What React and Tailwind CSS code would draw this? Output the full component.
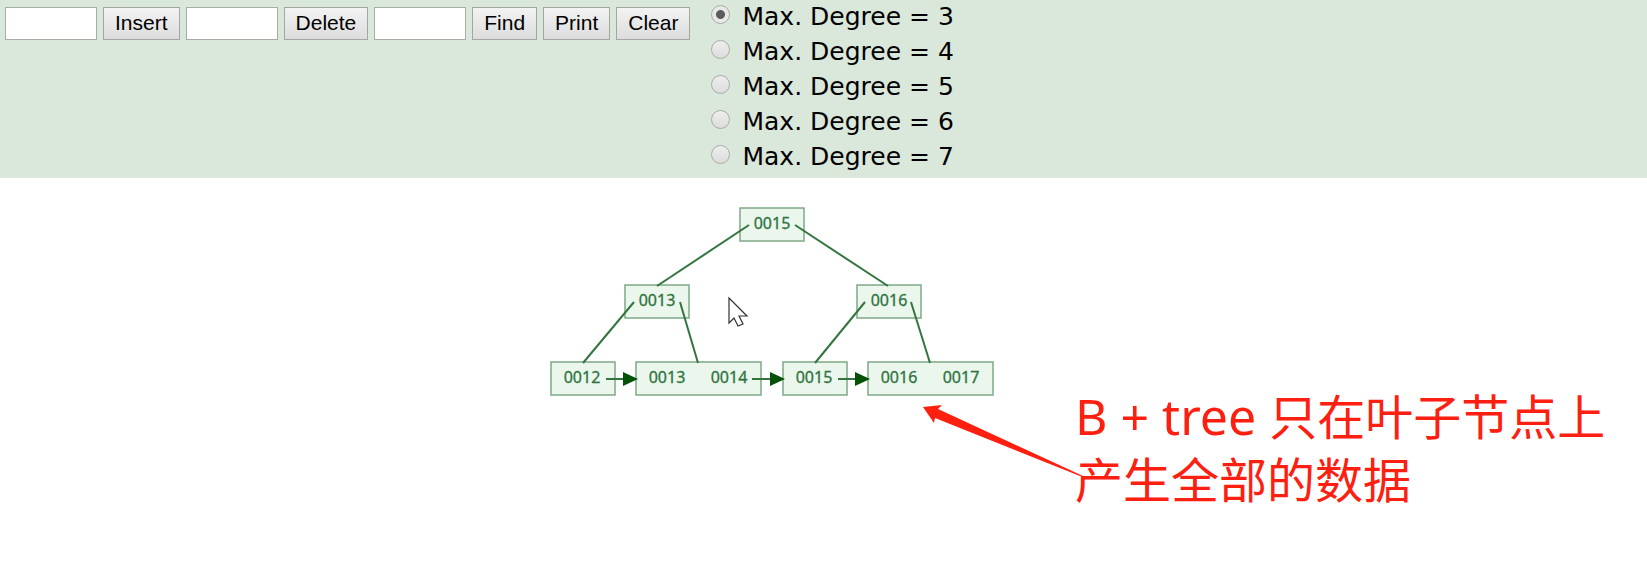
import React, { useState } from "react";

const DEGREES = [3, 4, 5, 6, 7];

const NODES = [
  { x: 740, y: 30, w: 64, keys: [["0015", 32]] },
  { x: 625, y: 107, w: 64, keys: [["0013", 32]] },
  { x: 857, y: 107, w: 64, keys: [["0016", 32]] },
  { x: 551, y: 184, w: 64, keys: [["0012", 31]] },
  { x: 636, y: 184, w: 125, keys: [["0013", 31], ["0014", 93]] },
  { x: 783, y: 184, w: 64, keys: [["0015", 31]] },
  { x: 868, y: 184, w: 125, keys: [["0016", 31], ["0017", 93]] },
];

const EDGES = [
  [749, 47, 657, 108],
  [795, 47, 888, 108],
  [634, 124, 583, 185],
  [680, 124, 698, 185],
  [865, 124, 815, 185],
  [911, 124, 930, 185],
];

const LINKS = [
  [606, 638],
  [752, 785],
  [838, 870],
];

const INPUT =
  "h-[33px] w-[92px] border border-[#a6aca6] bg-white px-1 font-['Liberation_Sans',sans-serif] text-[21px] text-black";
const BUTTON =
  "h-[33px] border border-[#a3a6a3] bg-linear-to-b from-[#f3f3f3] to-[#dddddd] px-[11px] pb-[2px] font-['Liberation_Sans',sans-serif] text-[21px] leading-7 text-black";

function Field({ label }) {
  return (
    <div className="flex gap-[6px]">
      <input type="text" aria-label={`${label} value`} className={INPUT} />
      <button type="button" className={BUTTON}>{label}</button>
    </div>
  );
}

function Controls() {
  const [degree, setDegree] = useState(3);
  return (
    <header className="flex items-start gap-[21px] bg-[#dae7db] pb-[3px] pl-[5px]">
      <div className="flex gap-[6px] pt-[7px]">
        <Field label="Insert" />
        <Field label="Delete" />
        <Field label="Find" />
        <button type="button" className={BUTTON}>Print</button>
        <button type="button" className={BUTTON}>Clear</button>
      </div>
      <div role="radiogroup" aria-label="Max. Degree">
        {DEGREES.map((d) => (
          <label
            key={d}
            className="flex h-[35px] items-start gap-[12px] font-['DejaVu_Sans',sans-serif] text-[25px] leading-[34px] text-black"
          >
            <input
              type="radio"
              name="degree"
              checked={degree === d}
              onChange={() => setDegree(d)}
              className="mt-[5px] size-[19px] appearance-none rounded-full border border-[#a9aca9] bg-linear-to-b from-[#eeeeee] to-[#dcdcdc] checked:bg-[radial-gradient(circle,#5c5c5c_4px,#e8e8e8_5px)]"
            />
            Max. Degree = {d}
          </label>
        ))}
      </div>
    </header>
  );
}

function Tree() {
  return (
    <svg
      width="1100"
      height="340"
      viewBox="0 0 1100 340"
      role="img"
      aria-label="B+ tree"
      className="block"
    >
      {NODES.map((n) => (
        <g key={`${n.x}-${n.y}`}>
          <rect x={n.x} y={n.y} width={n.w} height="33" fill="#ebf7ec" stroke="#7fa987" strokeWidth="1.5" />
          {n.keys.map(([key, dx]) => (
            <text
              key={key}
              x={n.x + dx}
              y={n.y + 21}
              textAnchor="middle"
              fill="#2f7440"
              stroke="#2f7440"
              strokeWidth="0.3"
              className="font-['Noto_Sans',sans-serif] text-base"
            >
              {key}
            </text>
          ))}
        </g>
      ))}
      {EDGES.map(([x1, y1, x2, y2]) => (
        <line key={`${x1}-${y1}`} x1={x1} y1={y1} x2={x2} y2={y2} stroke="#34753f" strokeWidth="2" />
      ))}
      {LINKS.map(([x1, x2]) => (
        <g key={x1}>
          <line x1={x1} y1="201" x2={x2 - 12} y2="201" stroke="#34753f" strokeWidth="2" />
          <path d={`M${x2} 201 l-15 -7 v14 z`} fill="#035208" />
        </g>
      ))}
      <path
        d="M729 120 v25 l5 -5 l4 8 l5 -2 l-4 -8 h8 z"
        fill="#ffffff"
        stroke="#333333"
        strokeWidth="1.2"
      />
      <path d="M923 229 L942 227 L938 231 L1083 298 L1080 298 L935 240 L934 245 Z" fill="#fd2010" />
    </svg>
  );
}

export default function App() {
  return (
    <div className="min-h-screen bg-white">
      <Controls />
      <main className="relative">
        <Tree />
        <p className="absolute top-[207px] left-[1075px] font-['Noto_Sans','Noto_Sans_CJK_SC',sans-serif] text-5xl leading-[63px] whitespace-nowrap text-[#fd2010]">
          <span className="text-[50px]">B + tree </span>
          只在叶子节点上
          <br />
          产生全部的数据
        </p>
      </main>
    </div>
  );
}
